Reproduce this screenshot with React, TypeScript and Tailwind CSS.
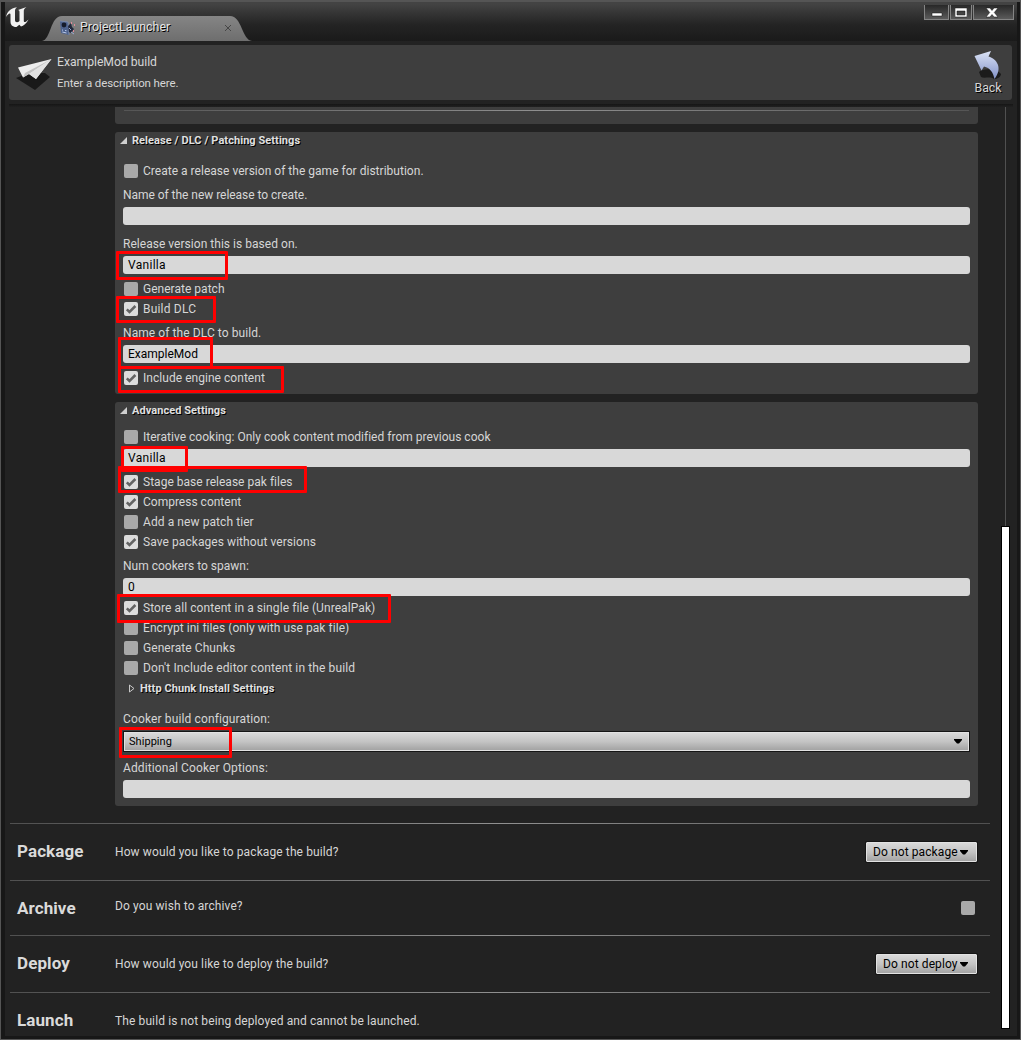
import { useState, type ReactNode } from "react";

function Check({ on }: { on?: boolean }) {
  return (
    <span className={`block h-[14px] w-[14px] shrink-0 rounded-[2px] ${on ? "bg-[#dcdcdc]" : "bg-[#a9a9a9]"}`}>
      {on && (
        <svg viewBox="0 0 14 14" className="h-[14px] w-[14px]">
          <path d="M2.800 7.300L5.500 10L11.400 4" fill="none" stroke="#636363" strokeWidth="2.5" />
        </svg>
      )}
    </span>
  );
}

function CheckRow({ label, checked = false, tracking = "tracking-[0.02px]", children }: { label: string; checked?: boolean; tracking?: string; children?: ReactNode }) {
  const [on, setOn] = useState(checked);
  return (
    <div className="relative h-5">
      <button type="button" onClick={() => setOn(!on)} className="flex h-5 items-center gap-[5px] pl-[9px]">
        <Check on={on} />
        <span className={`whitespace-pre ${tracking}`}>{label}</span>
      </button>
      {children}
    </div>
  );
}

function Field({ value = "", tracking = "tracking-normal", children }: { value?: string; tracking?: string; children?: ReactNode }) {
  return (
    <div className={`relative mx-2 flex h-[18px] items-center rounded-[3px] bg-[#d8d8d8] px-[5px] text-black ${tracking}`}>
      {value}
      {children}
    </div>
  );
}

function Label({ text, className = "" }: { text: string; className?: string }) {
  return <div className={`h-5 pl-2 leading-5 ${className}`}>{text}</div>;
}

function Mark({ className }: { className: string }) {
  return <span className={`pointer-events-none absolute z-10 rounded-[1px] border-3 border-[#ff0000] ${className}`} />;
}

function SectionTitle({ text }: { text: string }) {
  return (
    <div className="flex h-[18px] items-center gap-[5px] pl-[5px] text-[11px] font-bold tracking-[0.06px] text-[#e0e0e0] [text-shadow:1px_1px_0_#000]">
      <svg viewBox="0 0 7 7" className="-mt-px h-[7px] w-[7px]">
        <path d="M7 0V7H0Z" fill="#cfcfcf" />
      </svg>
      {text}
    </div>
  );
}

function Caret() {
  return (
    <svg viewBox="0 0 8 5" className="h-[5px] w-2 shrink-0">
      <path d="M0 0H8V1L5 4.5H3L0 1Z" fill="#000" />
    </svg>
  );
}

const buttonFace =
  "border border-[#e2e2e2] bg-linear-to-b from-[#d9d9d9] via-[#c4c4c4] to-[#a4a4a4] text-black shadow-[0_0_0_1px_#151515]";

function Dropdown({ text, width }: { text: string; width: string }) {
  return (
    <button type="button" className={`mr-px flex h-5 items-center justify-between rounded-[1px] pl-[6px] pr-[8px] tracking-[0.1px] ${width} ${buttonFace}`}>
      <span>{text}</span>
      <Caret />
    </button>
  );
}

function Divider({ className = "" }: { className?: string }) {
  return <div className={`ml-[10px] h-px w-[980px] bg-linear-to-r from-[#505050] via-[#909090] to-[#505050] ${className}`} />;
}

function Step({ title, text, height, shift = "", titleShift = "", children }: { title: string; text: string; height: string; shift?: string; titleShift?: string; children?: ReactNode }) {
  return (
    <div className={`flex items-center pr-[39px] pl-[17px] ${height}`}>
      <h2 className={`relative w-[98px] text-[17px] font-bold tracking-[0.1px] text-[#dadada] ${titleShift}`}>{title}</h2>
      <p className={`relative flex-1 tracking-[0.11px] ${shift}`}>{text}</p>
      {children}
    </div>
  );
}

function TitleBar() {
  return (
    <header className="relative flex h-[41px] shrink-0 bg-linear-to-b from-[#434343] from-10% via-[#242424] via-60% to-[#1a1a1a]">
      <svg viewBox="0 0 24 22" className="mt-[6px] h-[22px] w-6 shrink-0" fill="#f2f2f2">
        <path d="M1 11C2 6 5 2.500 12 1.300C10.300 2.500 10 3.500 10 5V14C10 16.500 12.500 17 14.500 15V6C14.500 4.700 14 4.200 13 4L21.500 1C19.500 2.500 18.800 3.500 18.800 5V14.500C18.800 17 20.500 16.500 23.500 13.500C21.500 17.500 18.500 20 16 20.500L14.300 18.700L11.500 21C7 21 5.500 18.500 5.500 15.500V8.500C5.500 6.500 3 7.500 1 11Z" />
      </svg>
      <div className="relative ml-[13px] mt-[16px] h-[25px] w-[210px] shrink-0">
        <svg viewBox="0 0 210 25" className="absolute inset-0 h-full w-full">
          <defs>
            <linearGradient id="tab" x1="0" x2="0" y1="0" y2="1">
              <stop offset="0" stopColor="#858585" />
              <stop offset="1" stopColor="#6e6e6e" />
            </linearGradient>
          </defs>
          <path d="M0 25C9 24 8 0 20 0H188C200 0 200 24 210 25Z" fill="url(#tab)" />
        </svg>
        <div className="relative flex h-[22px] items-center">
          <svg viewBox="0 0 17 16" className="mt-[2px] ml-[17px] h-4 w-[17px]">
            <path d="M1 1L9 2L10 15L2 13Z" fill="#4d628d" />
            <path d="M1 1L9 2L10 15" fill="none" stroke="#8193b8" strokeWidth=".7" />
            <circle cx="5" cy="5" r="2.400" fill="#151b2b" />
            <path d="M3 10L4 10.200M6 10.500L7.500 10.700M3.300 12L7.500 13" stroke="#b9c8e8" fill="none" />
            <path d="M9 6L12 3L13 7L15 9L12 13L10 12Z" fill="#20273c" />
            <path d="M10 8L12 10M12 12L15 14" stroke="#9aabd3" />
            <path d="M12 2h1v2h-1zM15 4h1v2h-1zM14 10h1v2h-1z" fill="#e18a98" />
          </svg>
          <span className="ml-1 text-[12.4px] text-[#e4e4e4] [text-shadow:1px_1px_0_#000]">ProjectLauncher</span>
          <svg viewBox="0 0 6 6" className="absolute left-[183px] top-[9px] h-[6px] w-[6px]">
            <path d="M0 0L6 6M6 0L0 6" stroke="#464646" />
          </svg>
        </div>
      </div>
      <div className="absolute top-[5px] right-[3px] flex h-[15px] gap-px">
        {["w-[25px]", "w-[22px]", "w-[41px]"].map((w, i) => (
          <button key={w} type="button" className={`flex items-center justify-center border border-t-0 border-[#858585] bg-linear-to-b from-[#282828] to-[#5b5b5b] ${w}`}>
            <svg viewBox="0 0 12 11" className={i === 2 ? "mr-[3px] h-[11px] w-3" : "h-[11px] w-3"} stroke="#111" strokeWidth=".5">
              {i === 0 && <path d="M1 6H11V9H1Z" fill="#fff" />}
              {i === 1 && <path fillRule="evenodd" d="M0 1H12V10H0ZM2 4V8H10V4Z" fill="#fff" />}
              {i === 2 && <path d="M0 1H4L6 3.500L8 1H12L8.300 5.500L12 10H8L6 7.500L4 10H0L3.700 5.500Z" fill="#fff" />}
            </svg>
          </button>
        ))}
      </div>
    </header>
  );
}

function ProfileHeader() {
  return (
    <section className="mr-[5px] ml-[4px] mt-[4px] flex h-[55px] shrink-0 rounded-[3px] bg-[#3e3e3e]">
      <svg viewBox="0 0 38 34" className="ml-[6px] mt-[12px] h-[34px] w-[38px]">
        <path d="M1 21L14 16H30L35 20L20 33Z" fill="#191919" />
        <path d="M3 10.500L36.500 2L21 22L14 17L8 20.500Z" fill="#ededed" />
        <path d="M36.500 2L10 16L8 20.500L14 17Z" fill="#c4c4c4" />
        <path d="M36.500 2L14 17L21 22Z" fill="#e3e3e3" />
      </svg>
      <div className="ml-1 flex-1">
        <h1 className="mt-[8px] h-[18px] text-[12.2px] leading-[18px] tracking-[-0.03px]">ExampleMod build</h1>
        <p className="mt-1 text-[11.5px] leading-[17px] tracking-[-0.1px]">Enter a description here.</p>
      </div>
      <button type="button" className="mr-[8px] flex w-[32px] flex-col items-center">
        <svg viewBox="0 0 30 30" className="mt-[5px] h-[30px] w-[30px] shrink-0">
          <defs>
            <linearGradient id="back" x1="0" x2="0" y1="0" y2="1">
              <stop offset="0" stopColor="#dce4f7" />
              <stop offset="1" stopColor="#8292c8" />
            </linearGradient>
          </defs>
          <path d="M6 22C10 18 24 18 28 24C28 27 24 29 21 29C17 26 11 29 8 27Z" fill="#1b1b1b" />
          <path d="M1.500 6L18 1L15.500 6.500C24 9 30 18 21.500 29C20 22 17 18 11 16.500L8.500 20.500Z" fill="url(#back)" />
        </svg>
        <span className="text-[12.3px] leading-4 [text-shadow:1px_1px_0_#000]">Back</span>
      </button>
    </section>
  );
}

export default function App() {
  return (
    <div className="h-[1040px] w-[1021px] overflow-hidden border border-t-2 border-[#555] bg-[#171717] pr-[3px] pl-[4px] font-['Roboto',sans-serif] text-[12px] text-[#d6d6d6]">
      <div className="-mt-[2px] flex h-[1036px] flex-col border-t border-[#555] bg-[#222]">
        <div className="-mt-px h-px shrink-0 bg-[#303030]" />
        <div className="-mb-px -mt-px h-px shrink-0" />
        <TitleBar />
        <ProfileHeader />
        <div className="mx-[4px] mt-[4px] h-[3px] shrink-0 bg-linear-to-b from-[#161616] to-[#202020]" />
        <main className="relative -ml-[5px] min-h-0 flex-1 overflow-hidden">
          <div className="ml-[115px] h-[17px] w-[863px] rounded-b-[3px] bg-[#3e3e3e] pt-[3px]">
            <div className="mx-[9px] h-px bg-linear-to-r from-[#555] via-[#909090] to-[#555]" />
          </div>

          <section className="mt-2 ml-[115px] h-[262px] w-[863px] rounded-[3px] bg-[#3e3e3e]">
            <SectionTitle text="Release / DLC / Patching Settings" />
            <div className="h-[11px]" />
            <CheckRow label="Create a release version of the game for distribution." />
            <Label text="Name of the new release to create." className="mt-1 mb-[2px] tracking-[-0.04px]" />
            <Field />
            <Label text="Release version this is based on." className="mt-[9px] mb-[2px] tracking-[0.03px]" />
            <Field value="Vanilla" tracking="tracking-[0.3px]"><Mark className="-top-[5px] -left-[7px] h-[29px] w-[112px]" /></Field>
            <div className="h-[5px]" />
            <CheckRow label="Generate patch" />
            <CheckRow label="Build DLC" checked tracking="tracking-[0.2px]"><Mark className="-top-[3px] left-px h-[27px] w-[100px]" /></CheckRow>
            <Label text="Name of the DLC to build." className="mt-1 mb-[2px] tracking-[0.08px]" />
            <Field value="ExampleMod"><Mark className="-top-[8px] -left-[5px] h-[32px] w-[95px]" /></Field>
            <div className="h-[5px]" />
            <CheckRow label="Include engine content" checked tracking="tracking-[0.04px]"><Mark className="-top-[2px] left-[3px] h-[27px] w-[166px]" /></CheckRow>
          </section>

          <section className="mt-2 ml-[115px] h-[404px] w-[863px] rounded-[3px] bg-[#3e3e3e]">
            <SectionTitle text="Advanced Settings" />
            <div className="h-[7px]" />
            <CheckRow label="Iterative cooking: Only cook content modified from previous cook" />
            <div className="h-[2px]" />
            <Field value="Vanilla" tracking="tracking-[0.3px]"><Mark className="-top-[3px] -left-[2px] h-[26px] w-[67px]" /></Field>
            <div className="h-[5px]" />
            <CheckRow label="Stage base release pak files" checked><Mark className="-top-[6px] left-[3px] h-[27px] w-[189px]" /></CheckRow>
            <CheckRow label="Compress content" checked tracking="tracking-normal" />
            <CheckRow label="Add a new patch tier" tracking="tracking-[0.08px]" />
            <CheckRow label="Save packages without versions" checked tracking="tracking-[0.07px]" />
            <Label text="Num cookers to spawn:" className="mt-1 mb-[2px]" />
            <Field value="0" />
            <div className="h-[2px]" />
            <CheckRow label="Store all content in a single file (UnrealPak)" checked tracking="tracking-[0.08px]"><Mark className="-top-[4px] left-[2px] h-[29px] w-[274px]" /></CheckRow>
            <CheckRow label="Encrypt ini files (only with use pak file)" tracking="tracking-[0.06px]" />
            <CheckRow label="Generate Chunks" tracking="tracking-[0.07px]" />
            <CheckRow label="Don't Include editor content in the build" tracking="tracking-[0.12px]" />
            <div className="flex h-5 items-center gap-[5px] pl-[14px] text-[11px] font-bold tracking-[0.06px] text-[#e0e0e0] [text-shadow:1px_1px_0_#000]">
              <svg viewBox="0 0 6 9" className="mt-px h-[9px] w-[6px]">
                <path d="M.5 1L5 4.500L.5 8Z" fill="none" stroke="#c8c8c8" />
              </svg>
              <span className="pt-[2px]">Http Chunk Install Settings</span>
            </div>
            <Label text="Cooker build configuration:" className="mt-[11px] mb-[3px] tracking-[0.13px]" />
            <div className={`relative mx-[9px] flex h-[19px] items-center justify-between pr-[6px] pl-1 text-[11px] tracking-[0.05px] ${buttonFace}`}>
              <span className="pt-px">Shipping</span>
              <Caret />
              <Mark className="-top-[6px] -left-[6px] h-[31px] w-[113px]" />
            </div>
            <Label text="Additional Cooker Options:" className="mt-[7px] mb-[2px] tracking-[0.1px]" />
            <Field />
          </section>

          <Divider className="mt-[17px]" />
          <Step title="Package" text="How would you like to package the build?" height="h-[56px]"><Dropdown text="Do not package" width="w-[111px]" /></Step>
          <Divider />
          <Step title="Archive" text="Do you wish to archive?" height="h-[54px]" shift="-top-[2px]" titleShift="top-px"><span className="mr-[3px]"><Check /></span></Step>
          <Divider />
          <Step title="Deploy" text="How would you like to deploy the build?" height="h-[56px]"><Dropdown text="Do not deploy" width="w-[101px]" /></Step>
          <Divider />
          <Step title="Launch" text="The build is not being deployed and cannot be launched." height="h-[56px]" />

          <div className="absolute top-0 left-[1001px] flex h-[922px] w-[9px] flex-col items-center">
            <div className="h-[419px] w-px bg-[#505050]" />
            <div className="h-[503px] w-[9px] border border-black bg-white" />
          </div>
        </main>
      </div>
    </div>
  );
}
